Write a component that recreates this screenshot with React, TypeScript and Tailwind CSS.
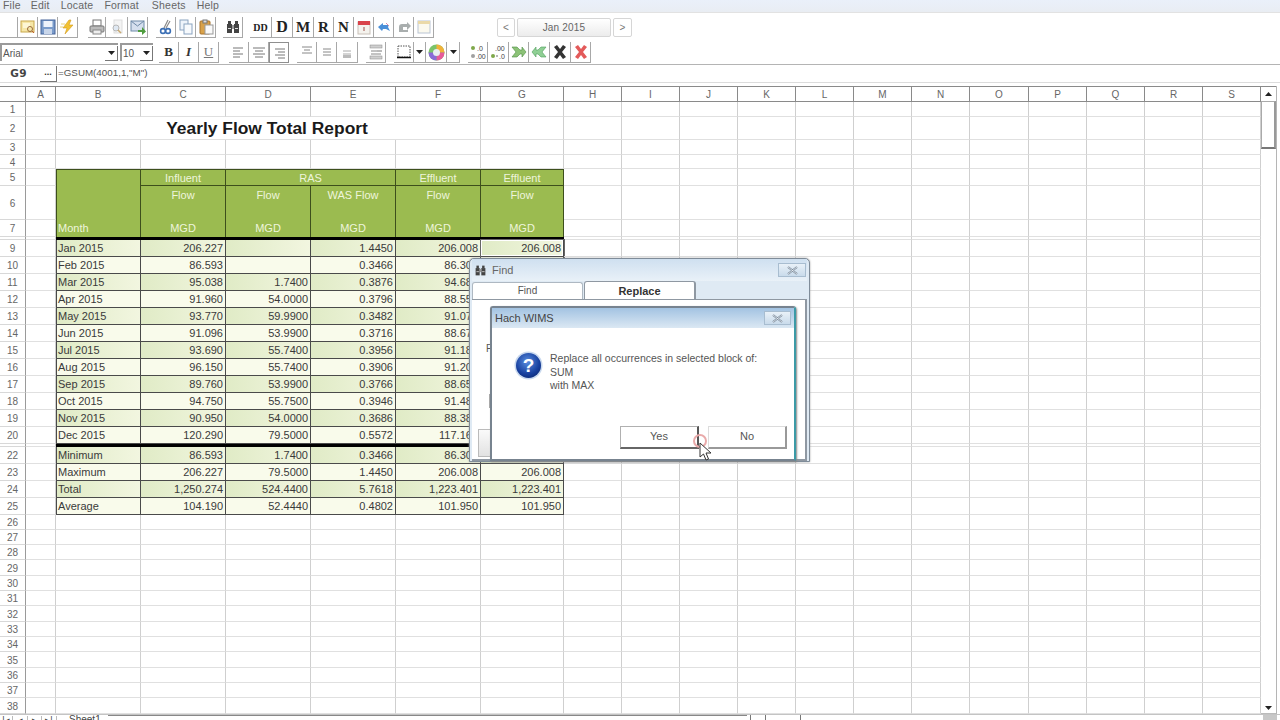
import React from "react";

const COLS = ["A","B","C","D","E","F","G","H","I","J","K","L","M","N","O","P","Q","R","S"];
const months: string[][] = [
  ["Jan 2015","206.227","","1.4450","206.008","206.008"],
  ["Feb 2015","86.593","","0.3466","86.307","86.307"],
  ["Mar 2015","95.038","1.7400","0.3876","94.687","94.687"],
  ["Apr 2015","91.960","54.0000","0.3796","88.557","88.557"],
  ["May 2015","93.770","59.9900","0.3482","91.072","91.072"],
  ["Jun 2015","91.096","53.9900","0.3716","88.671","88.671"],
  ["Jul 2015","93.690","55.7400","0.3956","91.183","91.183"],
  ["Aug 2015","96.150","55.7400","0.3906","91.206","91.206"],
  ["Sep 2015","89.760","53.9900","0.3766","88.657","88.657"],
  ["Oct 2015","94.750","55.7500","0.3946","91.485","91.485"],
  ["Nov 2015","90.950","54.0000","0.3686","88.381","88.381"],
  ["Dec 2015","120.290","79.5000","0.5572","117.164","117.164"],
];
const stats: string[][] = [
  ["Minimum","86.593","1.7400","0.3466","86.307","86.307"],
  ["Maximum","206.227","79.5000","1.4450","206.008","206.008"],
  ["Total","1,250.274","524.4400","5.7618","1,223.401","1,223.401"],
  ["Average","104.190","52.4440","0.4802","101.950","101.950"],
];

const grid = "border-r border-b border-r-[#cfcfcf] border-b-[#e0e0e0]";
const hdrCell = "border-r border-[#3d4f1c] bg-[#9bbb50] text-[#eef5dc] text-center text-[11px]";
const rowHdr = "border-r border-b border-r-[#9a9a9a] border-b-[#d8d8d8] text-[10px] text-[#666] flex items-center justify-center pt-[1px]";

function Blank({ n }: { n: number }) {
  return <>{Array.from({ length: n }).map((_, i) => <div key={i} className={grid} />)}</>;
}

function RowHead({ n }: { n?: number }) {
  return <div className={rowHdr}>{n ?? ""}</div>;
}

function DataRow({ n, d, shade, sel }: { n: number; d: string[]; shade: boolean; sel?: boolean }) {
  const bg = shade ? "bg-linear-to-r from-[#e0ebc6] to-[#f2f6e0]" : "bg-[#f9fbeb]";
  return (
    <>
      <RowHead n={n} />
      <div className={grid} />
      {d.map((v, i) => (
        <div
          key={i}
          className={`${bg} border-r border-b border-[#4a4a4a] text-[11px] leading-[17px] text-[#3a3a3a] whitespace-nowrap overflow-hidden ${i === 0 ? "border-l pl-[1px] text-left" : "pr-[2px] text-right"} ${sel && i === 5 ? "shadow-[inset_0_0_0_1px_#ffffff,0_0_0_1px_#666666]" : ""}`}
        >
          {v}
        </div>
      ))}
      <Blank n={12} />
    </>
  );
}

function BlackRow() {
  return (
    <>
      <RowHead />
      <div className={grid} />
      <div className="col-span-6 bg-black" />
      <Blank n={12} />
    </>
  );
}

function Sheet() {
  return (
    <div className="grid w-[1261px] text-[#333] grid-cols-[26px_30px_85px_85px_85px_85px_85px_83px_58px_58px_58px_58px_58px_58px_58px_59px_58px_58px_58px_58px] grid-rows-[16px_15px_23px_15px_14px_17px_34px_17px_3px_repeat(12,17px)_3px_repeat(4,17px)_15px_repeat(4,15px_15px_16px)]">
      <div className="border-t border-r border-b border-[#8a8a8a]" />
      {COLS.map((c) => (
        <div key={c} className="border-t border-r border-b border-[#8a8a8a] text-[10px] text-[#666] text-center leading-[15px]">{c}</div>
      ))}

      <RowHead n={1} /><Blank n={19} />

      <RowHead n={2} />
      <div className={grid} />
      <div className={`col-span-5 ${grid} text-[17.4px] font-bold text-[#1a1a1a] text-center leading-[22px] pr-[2px]`}>Yearly Flow Total Report</div>
      <Blank n={13} />

      <RowHead n={3} /><Blank n={19} />
      <RowHead n={4} /><Blank n={19} />

      <RowHead n={5} />
      <div className={grid} />
      <div className="row-span-3 border-t border-l border-r border-[#3d4f1c] bg-[#9bbb50] text-[#eef5dc] text-[11px] flex items-end pl-[1px] leading-[17px]">Month</div>
      <div className={`${hdrCell} border-t border-b leading-[17px]`}>Influent</div>
      <div className={`${hdrCell} border-t border-b col-span-2 leading-[17px]`}>RAS</div>
      <div className={`${hdrCell} border-t border-b leading-[17px]`}>Effluent</div>
      <div className={`${hdrCell} border-t border-b leading-[17px]`}>Effluent</div>
      <Blank n={12} />

      <RowHead n={6} />
      <div className={grid} />
      {["Flow","Flow","WAS Flow","Flow","Flow"].map((t, i) => (
        <div key={i} className={`${hdrCell} leading-[18px]`}>{t}</div>
      ))}
      <Blank n={12} />

      <RowHead n={7} />
      <div className={grid} />
      {[0,1,2,3,4].map((i) => <div key={i} className={`${hdrCell} leading-[16px]`}>MGD</div>)}
      <Blank n={12} />

      <BlackRow />
      {months.map((d, i) => <DataRow key={i} n={9 + i} d={d} shade={i % 2 === 0} sel={i === 0} />)}
      <BlackRow />
      {stats.map((d, i) => <DataRow key={i} n={22 + i} d={d} shade={i % 2 === 0} />)}
      {Array.from({ length: 13 }).map((_, i) => (
        <React.Fragment key={i}><RowHead n={26 + i} /><Blank n={19} /></React.Fragment>
      ))}
    </div>
  );
}

function Tb({ w = "w-[20px]", pressed, children }: { w?: string; pressed?: boolean; children?: React.ReactNode }) {
  return (
    <div className={`${w} h-[21px] shrink-0 flex items-center justify-center border-r border-b ${pressed ? "border-t border-l border-[#8f8f8f]" : "border-[#a8a8a8]"}`}>
      {children}
    </div>
  );
}
function Ico({ children }: { children: React.ReactNode }) {
  return <svg width="16" height="16" viewBox="0 0 16 16" fill="none">{children}</svg>;
}
const Lines = ({ a }: { a: "l" | "c" | "r" }) => {
  const xs = a === "l" ? [[2,12],[2,9],[2,12],[2,9]] : a === "c" ? [[2,14],[4,12],[2,14],[4,12]] : [[4,14],[7,14],[4,14],[7,14]];
  return <Ico>{xs.map((x, i) => <line key={i} x1={x[0]} x2={x[1]} y1={4 + i * 3} y2={4 + i * 3} stroke="#777" strokeWidth="1" />)}</Ico>;
};
const Arrow = () => <svg width="7" height="4" viewBox="0 0 7 4"><path d="M0 0h7L3.5 4z" fill="#222" /></svg>;

function Bino({ c = "#444", s = 16 }: { c?: string; s?: number }) {
  return (
    <svg width={s} height={s} viewBox="0 0 16 16">
      <rect x="2" y="5" width="5" height="9" fill={c} />
      <rect x="9" y="5" width="5" height="9" fill={c} />
      <rect x="3" y="2" width="3" height="3" fill={c} />
      <rect x="10" y="2" width="3" height="3" fill={c} />
      <rect x="7" y="6" width="2" height="4" fill="#999" />
      <rect x="3" y="9" width="3" height="1" fill="#ddd" />
      <rect x="10" y="9" width="3" height="1" fill="#ddd" />
    </svg>
  );
}

function ToolbarOne() {
  return (
    <div className="h-[27px] flex items-start pt-[4px]">
      <div className="flex w-[78px] justify-end">
        <Tb w="w-[18px]"><Ico><path d="M1 1h6v14H1z" fill="#fff" /></Ico></Tb>
        <Tb><Ico><rect x="1" y="2" width="13" height="11" fill="#f6e7a8" stroke="#c9a84a" /><rect x="3" y="4" width="7" height="5" fill="#fdf6d4" /><circle cx="10" cy="10" r="2.5" stroke="#9a6a3a" /><path d="M12 12l2 2" stroke="#c05a30" /></Ico></Tb>
        <Tb><Ico><rect x="1" y="1" width="14" height="14" fill="#7b9ccb" stroke="#46659a" /><rect x="3.5" y="2" width="9" height="6" fill="#eef3fb" /><rect x="4" y="10" width="8" height="5" fill="#c9d6ea" /></Ico></Tb>
        <Tb><Ico><path d="M9 1L3 9h4l-2 6 8-9H9l2-5z" fill="#f2c230" stroke="#d49a20" strokeWidth=".6" /><path d="M1 5h4M0 8h3" stroke="#e8d27a" /></Ico></Tb>
      </div>
      <div className="flex ml-[10px]">
        <Tb w="w-[18px]"><Ico><rect x="4" y="1" width="8" height="6" fill="#fff" stroke="#777" /><rect x="1" y="7" width="14" height="6" rx="1" fill="#bbb" stroke="#777" /><rect x="4" y="11" width="8" height="4" fill="#eee" stroke="#888" /></Ico></Tb>
        <Tb w="w-[22px]"><Ico><rect x="5" y="1" width="8" height="13" fill="#f4f4f4" stroke="#ddd" /><circle cx="7" cy="9" r="3" fill="#dfe8f2" stroke="#b7b7b7" /><path d="M9 11l3 3" stroke="#c8a870" strokeWidth="1.5" /></Ico></Tb>
        <Tb><Ico><rect x="1" y="2" width="13" height="10" fill="#d5dfee" stroke="#6f8aa8" /><path d="M1 2l6.5 5L14 2" stroke="#6f8aa8" /><path d="M8 11h4V8l4 4.5L12 16v-3H8z" fill="#4f9d3d" /></Ico></Tb>
      </div>
      <div className="flex ml-[8px]">
        <Tb><Ico><path d="M10 1L6 9M12 2L8 9" stroke="#8a8a8a" strokeWidth="1.2" /><circle cx="5" cy="12" r="2.4" stroke="#3b6fb5" strokeWidth="1.6" /><circle cx="10" cy="12" r="2.4" stroke="#3b6fb5" strokeWidth="1.6" /></Ico></Tb>
        <Tb><Ico><rect x="2" y="1" width="8" height="10" fill="#eef4fb" stroke="#8aa3c0" /><rect x="6" y="5" width="8" height="10" fill="#f7fafd" stroke="#8aa3c0" /></Ico></Tb>
        <Tb><Ico><rect x="2" y="2" width="10" height="13" rx="1" fill="#d9a24a" stroke="#a8722a" /><rect x="5" y="1" width="4" height="3" fill="#ddd" stroke="#777" /><rect x="7" y="6" width="8" height="9" fill="#fafafa" stroke="#999" /></Ico></Tb>
      </div>
      <div className="flex ml-[7px]"><Tb><Bino /></Tb></div>
      <div className="flex ml-[7px] font-['Liberation_Serif',serif] font-bold text-[#222]">
        <Tb w="w-[22px]"><span className="text-[10px]">DD</span></Tb>
        <Tb w="w-[21px]"><span className="text-[16px]">D</span></Tb>
        <Tb w="w-[21px]"><span className="text-[15px]">M</span></Tb>
        <Tb><span className="text-[15px]">R</span></Tb>
        <Tb><span className="text-[15px]">N</span></Tb>
      </div>
      <div className="flex">
        <Tb><Ico><rect x="2" y="3" width="12" height="12" fill="#f5f3ee" stroke="#c8c0b8" /><rect x="2" y="2" width="12" height="4" fill="#d9434a" /><rect x="7" y="8" width="2" height="4" fill="#c9a09a" /></Ico></Tb>
        <Tb><Ico><path d="M2 8l5-4v2h6l-1 2 2 4-4-2H7l-1 2z" fill="#4a90d9" /><path d="M10 4l3 3" stroke="#d88ca8" /></Ico></Tb>
        <Tb><Ico><path d="M3 11V8a3 3 0 013-3h5V3l4 4-4 4V8H7v3z" fill="#a9aeae" /><rect x="3" y="11" width="9" height="2" fill="#a9aeae" /></Ico></Tb>
        <Tb><Ico><rect x="2" y="2" width="12" height="12" fill="#fbf9ee" stroke="#b9c4d4" /><rect x="2" y="2" width="12" height="3" fill="#ead9a8" /></Ico></Tb>
      </div>
      <div className="flex items-stretch ml-[63px] h-[19px] mt-[1px] text-[10px] text-[#666]">
        <div className="w-[18px] border border-[#d6d6d6] rounded-[2px] flex items-center justify-center text-[#777]">&lt;</div>
        <div className="w-[94px] ml-[2px] border border-[#d6d6d6] rounded-[2px] bg-linear-to-b from-[#ffffff] to-[#ececec] flex items-center justify-center tracking-[0.2px]">Jan 2015</div>
        <div className="w-[19px] ml-[2px] border border-[#d6d6d6] rounded-[2px] flex items-center justify-center text-[#777]">&gt;</div>
      </div>
    </div>
  );
}

function Combo({ w, text }: { w: string; text: string }) {
  return (
    <div className={`${w} h-[18px] border-t-2 border-l-2 border-[#9a9a9a] flex items-center justify-between text-[10px] text-[#555]`}>
      <span className="pl-[1px]">{text}</span>
      <div className="w-[13px] h-[15px] border-r border-b border-[#777] flex items-center justify-center"><Arrow /></div>
    </div>
  );
}

function ToolbarTwo() {
  return (
    <div className="h-[25px] border-b border-[#b4b4b4] flex items-start pt-[2px]">
      <div className="mt-[1px] flex"><Combo w="w-[118px]" text="Arial" /><div className="ml-[2px]"><Combo w="w-[33px]" text="10" /></div></div>
      <div className="flex ml-[6px] font-['Liberation_Serif',serif] text-[#333]">
        <Tb><span className="text-[13px] font-bold">B</span></Tb>
        <Tb><span className="text-[13px] font-bold italic">I</span></Tb>
        <Tb><span className="text-[13px] underline text-[#777]">U</span></Tb>
      </div>
      <div className="flex ml-[10px]">
        <Tb><Lines a="l" /></Tb><Tb><Lines a="c" /></Tb><Tb pressed><Lines a="r" /></Tb>
      </div>
      <div className="flex ml-[8px]">
        <Tb><Ico><path d="M3 3h10M5 6h6M3 9h10" stroke="#888" /></Ico></Tb>
        <Tb><Ico><path d="M4 5h8M4 8h8M4 11h8" stroke="#888" /></Ico></Tb>
        <Tb w="w-[21px]"><Ico><path d="M4 7h8M4 10h8" stroke="#aaa" /><rect x="4" y="11" width="8" height="3" fill="#bbb" /></Ico></Tb>
      </div>
      <div className="flex ml-[8px]">
        <Tb><Ico><rect x="2" y="1" width="12" height="3" fill="#cfcfcf" stroke="#888" strokeWidth=".5" /><path d="M3 7h6M3 10h10" stroke="#888" /><rect x="9" y="6" width="5" height="2" fill="#bbb" /><rect x="2" y="12" width="12" height="3" fill="#cfcfcf" stroke="#888" strokeWidth=".5" /></Ico></Tb>
      </div>
      <div className="flex ml-[8px]">
        <Tb><Ico><rect x="2" y="2" width="12" height="11" stroke="#555" strokeDasharray="1.5 1" /><line x1="1" x2="15" y1="13.5" y2="13.5" stroke="#111" strokeWidth="1.5" /></Ico></Tb>
        <Tb w="w-[12px]"><Arrow /></Tb>
        <Tb w="w-[21px]" >
          <svg width="17" height="17" viewBox="0 0 17 17">
            <circle cx="8.5" cy="8.5" r="8" fill="#7ac46a" />
            <path d="M8.5 8.5L8.5 .5A8 8 0 0116.5 8.5z" fill="#f2b23a" />
            <path d="M8.5 8.5L16.5 8.5A8 8 0 018.5 16.5z" fill="#e85a9a" />
            <path d="M8.5 8.5L8.5 16.5A8 8 0 01.5 8.5z" fill="#8a6ad8" />
            <circle cx="8.5" cy="8.5" r="3.5" fill="#e8eef0" />
          </svg>
        </Tb>
        <Tb w="w-[13px]"><Arrow /></Tb>
      </div>
      <div className="flex ml-[8px]">
        <Tb><svg width="18" height="16" viewBox="0 0 18 16"><circle cx="4" cy="4" r="2" fill="#7fa84a" /><circle cx="4" cy="12" r="2" fill="#a0a0a0" /><text x="8" y="7" fontSize="7" fill="#444">.0</text><text x="7" y="15" fontSize="7" fill="#444">.00</text></svg></Tb>
        <Tb w="w-[21px]"><svg width="18" height="16" viewBox="0 0 18 16"><circle cx="4" cy="12" r="2" fill="#7fa84a" /><circle cx="8" cy="12" r="1" fill="#a0a0a0" /><text x="6" y="7" fontSize="7" fill="#444">.00</text><text x="10" y="15" fontSize="7" fill="#444">.0</text></svg></Tb>
        <Tb><Ico><path d="M1 3h5l3 3h2V3l4 5-4 5v-3H9l-3 3H1l4-5z" fill="#8cc277" stroke="#4f8e43" strokeWidth=".6" /></Ico></Tb>
        <Tb w="w-[21px]"><Ico><path d="M15 3h-5L7 6H5V3L1 8l4 5v-3h2l3 3h5l-4-5z" fill="#8fcf94" stroke="#4f9e5b" strokeWidth=".6" /></Ico></Tb>
        <Tb w="w-[21px]"><Ico><path d="M2 3l3-2 3 4 3-4 3 2-4 5 4 5-3 2-3-4-3 4-3-2 4-5z" fill="#333" /></Ico></Tb>
        <Tb><Ico><path d="M2 3l3-2 3 4 3-4 3 2-4 5 4 5-3 2-3-4-3 4-3-2 4-5z" fill="#e35a5a" /></Ico></Tb>
      </div>
    </div>
  );
}

function XBtn({ w }: { w: string }) {
  return (
    <div className={`${w} h-[14px] border border-[#a8bdd0] bg-linear-to-b from-[#e9f1f8] to-[#c9dbeb] flex items-center justify-center`}>
      <svg width="11" height="9" viewBox="0 0 11 9"><path d="M1 1l9 7M10 1L1 8" stroke="#7a8a9a" strokeWidth="2" /><path d="M1 1l9 7M10 1L1 8" stroke="#f4f7fa" strokeWidth=".7" /></svg>
    </div>
  );
}

function FindWindow() {
  return (
    <div className="absolute left-[469px] top-[258px] w-[341px] h-[204px] rounded-t-[5px] border border-[#7f8c99] bg-[#dfeaf4] shadow-[0_0_2px_#999] flex flex-col px-[2px] text-[10px] text-[#555]">
      <div className="h-[22px] flex items-center justify-between pl-[2px] pr-[1px] bg-linear-to-b from-[#cfe0f0] to-[#e9f1f8] shrink-0">
        <div className="flex items-center gap-[5px]"><Bino s={13} /><span className="text-[11px] text-[#666]">Find</span></div>
        <XBtn w="w-[28px]" />
      </div>
      <div className="flex items-end h-[18px] shrink-0">
        <div className="w-[111px] h-[17px] border border-b-0 border-[#aeb8c2] rounded-t-[3px] bg-white text-center leading-[15px] text-[10px] text-[#555]">Find</div>
        <div className="w-[112px] h-[18px] ml-[1px] border-t border-l border-r-2 border-[#8f98a2] rounded-t-[3px] bg-white text-center leading-[18px] font-bold text-[11px] text-[#333]">Replace</div>
      </div>
      <div className="flex-1 bg-white border-t border-r-2 border-b-2 border-[#8f98a2] relative">
        <span className="absolute left-[14px] top-[41px] text-[10px]">F</span>
        <div className="absolute left-[17px] top-[94px] w-[10px] h-[14px] border border-[#aaa]" />
        <div className="absolute left-[6px] top-[129px] w-[20px] h-[28px] border border-[#bbb] bg-linear-to-b from-[#fafafa] to-[#e2e2e2]" />
      </div>
    </div>
  );
}

function Dialog() {
  return (
    <div className="absolute left-[490px] top-[306px] w-[306px] h-[155px] border-2 border-[#77838f] border-r-[#3b9aa6] rounded-t-[3px] bg-white flex flex-col text-[#444] shadow-[1px_1px_2px_#888]">
      <div className="h-[20px] shrink-0 flex items-center justify-between pl-[3px] pr-[3px] bg-linear-to-b from-[#a3c3e2] to-[#dbe8f3]">
        <span className="text-[11px] text-[#444]">Hach WIMS</span>
        <XBtn w="w-[27px]" />
      </div>
      <div className="flex items-start pl-[22px] pt-[23px] h-[77px] shrink-0">
        <svg width="29" height="29" viewBox="0 0 29 29" className="shrink-0">
          <defs>
            <radialGradient id="q" cx="45%" cy="35%" r="70%">
              <stop offset="0%" stopColor="#5b8fe0" />
              <stop offset="70%" stopColor="#173f9e" />
              <stop offset="100%" stopColor="#0c2a78" />
            </radialGradient>
          </defs>
          <circle cx="14.5" cy="14.5" r="14" fill="#c8d8ee" />
          <circle cx="14.5" cy="14.5" r="12.5" fill="url(#q)" />
          <text x="14.5" y="21" textAnchor="middle" fontSize="19" fontWeight="bold" fill="#fff" fontFamily="Liberation Sans">?</text>
        </svg>
        <div className="ml-[7px] mt-[1px] text-[10.5px] leading-[13.5px] text-[#555]">
          <div>Replace all occurrences in selected block of:</div>
          <div>SUM</div>
          <div>with MAX</div>
        </div>
      </div>
      <div className="flex pl-[128px] pt-[21px] text-[11px] text-[#555]">
        <div className="w-[79px] h-[23px] pb-[2px] border border-[#b0b0b0] border-r-2 border-b-2 border-r-[#555] border-b-[#666] flex items-center justify-center">Yes</div>
        <div className="w-[79px] h-[23px] pb-[2px] ml-[9px] border border-[#dcdcdc] border-r-2 border-b-2 border-r-[#999] border-b-[#999] flex items-center justify-center">No</div>
      </div>
    </div>
  );
}

function Cursor() {
  return (
    <>
      <div className="absolute left-[693px] top-[434px] w-[14px] h-[14px] rounded-full border-2 border-[#e9aaaa]" />
      <svg className="absolute left-[699px] top-[442px]" width="13" height="20" viewBox="0 0 13 20">
        <path d="M1 1v14l3.5-3 2.5 6 2.5-1-2.5-6H12z" fill="#fff" stroke="#333" strokeWidth="1" />
      </svg>
    </>
  );
}

function VScroll() {
  return (
    <div className="w-[16px] h-[628px] border-r border-[#b5b5b5] flex flex-col">
      <div className="h-[15px] flex items-center justify-center border-t border-[#8a8a8a]">
        <svg width="7" height="4" viewBox="0 0 7 4"><path d="M0 4h7L3.5 0z" fill="#222" /></svg>
      </div>
      <div className="h-[48px] border-t border-l border-r-2 border-b-2 border-[#aaa] border-b-[#777] border-r-[#999]" />
      <div className="flex-1" />
      <div className="h-[12px] flex items-center justify-center border-b border-[#bbb]"><Arrow /></div>
    </div>
  );
}

function BottomBar() {
  return (
    <div className="h-[6px] border-t border-[#c4c4c4] flex text-[9px] leading-[8px] text-[#444] overflow-hidden">
      <div className="flex w-[59px] shrink-0 pt-[1px]">
        <div className="w-[13px] border-r border-[#bbb] text-center">|◂</div>
        <div className="w-[15px] border-r border-[#bbb] text-center">◂</div>
        <div className="w-[14px] border-r border-[#bbb] text-center">▸</div>
        <div className="w-[15px] border-r border-[#bbb] text-center">▸|</div>
      </div>
      <div className="w-[49px] shrink-0 pl-[10px] pt-[1px] text-[10px]">Sheet1</div>
      <div className="w-[639px] shrink-0 border-t border-[#888]" />
      <div className="w-[4px] shrink-0 border-r border-[#777]" />
      <div className="w-[15px] border-r border-[#777] shrink-0" />
      <div className="w-[35px] border-r border-[#777] shrink-0" />
      <div className="flex-1" />
      <div className="w-[14px] shrink-0 bg-[#c8c8c8] mr-[3px]" />
    </div>
  );
}

export default function App() {
  return (
    <div className="relative w-[1280px] h-[720px] overflow-hidden bg-white font-['Liberation_Sans',Arial,sans-serif] text-[#333]">
      <div className="h-[13px] bg-linear-to-b from-[#eaf0fa] to-[#e9edf3] border-b border-[#e2e2e2] flex text-[10.5px] tracking-[0.2px] text-[#666] leading-[11px] overflow-hidden">
        <span className="ml-[3px]">File</span>
        <span className="ml-[10px]">Edit</span>
        <span className="ml-[11px]">Locate</span>
        <span className="ml-[11px]">Format</span>
        <span className="ml-[13px]">Sheets</span>
        <span className="ml-[11px]">Help</span>
      </div>
      <ToolbarOne />
      <ToolbarTwo />
      <div className="h-[18px] border-b border-[#dcdcdc] flex items-center">
        <div className="w-[40px] text-center font-bold text-[10.5px] text-[#444] font-['DejaVu_Sans',sans-serif] tracking-[0.3px] pr-[3px]">G9</div>
        <div className="w-[17px] h-[16px] border-r border-b border-[#777] text-[9px] text-center leading-[12px] font-bold">...</div>
        <div className="ml-[1px] text-[9.8px] text-[#555] pb-[1px]">=GSUM(4001,1,"M")</div>
      </div>
      <div className="h-[3px]" />
      <div className="flex">
        <Sheet />
        <VScroll />
      </div>
      <BottomBar />
      <FindWindow />
      <Dialog />
      <Cursor />
    </div>
  );
}
